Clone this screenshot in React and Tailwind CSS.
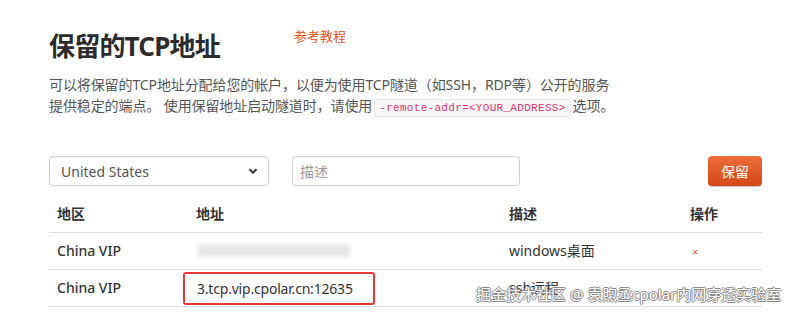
import React from "react";

const rows = [
    { region: "China VIP", address: null, desc: "windows桌面", action: true },
    { region: "China VIP", address: "3.tcp.vip.cpolar.cn:12635", desc: "ssh远程", action: false },
];

export default function App() {
    return (
        <div className="relative w-[798px] h-[312px] overflow-hidden bg-white font-['Noto_Sans','Noto_Sans_CJK_SC',sans-serif] text-[#333]">
            <div className="w-[713px] ml-[49px] pt-[30px]">
                {/* Title */}
                <div className="flex items-start">
                    <h1 className="text-[26px] leading-[32px] font-bold text-[#2b2b2b] tracking-[-0.8px]">保留的TCP地址</h1>
                    <a className="ml-[74px] -mt-[4px] text-[13px] leading-[20px] text-[#de5520]">参考教程</a>
                </div>

                {/* Description */}
                <p className="mt-[12px] text-[14px] leading-[21px] text-[#555] tracking-[-0.1px]">
                    可以将保留的TCP地址分配给您的帐户，以便为使用TCP隧道（如SSH，RDP等）公开的服务
                    <br />
                    提供稳定的端点。 使用保留地址启动隧道时，请使用
                    <code className="mx-[2px] px-[4px] py-[2px] rounded-[3px] border border-[#e6e6e6] bg-[#f7f7f9] text-[11px] leading-[14px] tracking-[0.3px] text-[#d6336c] font-['Liberation_Mono',monospace]">
                        -remote-addr=&lt;YOUR_ADDRESS&gt;
                    </code>
                    选项。
                </p>

                {/* Controls */}
                <div className="mt-[40px] flex items-center h-[30px]">
                    <div className="w-[220px] h-[30px] flex items-center justify-between px-[11px] border border-[#cfcfcf] rounded-[4px] text-[14px] text-[#555]">
                        <span>United States</span>
                        <svg width="10" height="10" viewBox="0 0 10 10" className="mr-[-1px]">
                            <path d="M1.5 3.2 L5 6.7 L8.5 3.2" fill="none" stroke="#333" strokeWidth="2" />
                        </svg>
                    </div>
                    <div className="ml-[23px] w-[228px] h-[30px] flex items-center px-[7px] border border-[#cfcfcf] rounded-[4px] text-[14px] text-[#9a9a9a]">
                        描述
                    </div>
                    <button className="ml-auto w-[54px] h-[30px] rounded-[4px] bg-gradient-to-b from-[#ee6d38] to-[#d44617] text-white text-[14px] shadow-[0_1px_1px_rgba(0,0,0,0.25)]">
                        保留
                    </button>
                </div>

                {/* Table */}
                <table className="mt-[9px] w-full border-collapse text-[14px]">
                    <thead>
                        <tr className="h-[37px] border-b border-[#dedede] text-left">
                            <th className="w-[139px] pl-[8px] font-bold text-[#333]">地区</th>
                            <th className="w-[313px] pl-[8px] font-bold text-[#333]">地址</th>
                            <th className="w-[181px] pl-[8px] font-bold text-[#333]">描述</th>
                            <th className="pl-[8px] font-bold text-[#333]">操作</th>
                        </tr>
                    </thead>
                    <tbody>
                        {rows.map((row, i) => (
                            <tr key={i} className="h-[37px] border-b border-[#dedede]">
                                <td className="pl-[8px] font-medium text-[#333]">{row.region}</td>
                                <td className="pl-[8px]">
                                    {row.address ? (
                                        <div className="-ml-[13px] w-[192px] h-[33px] mt-[1px] flex items-center pl-[12px] border-2 border-[#e53935] rounded-[3px] text-[#333] tracking-[-0.2px]">
                                            {row.address}
                                        </div>
                                    ) : (
                                        <div className="ml-[2px] w-[152px] h-[12px] bg-[#e6e6e6] blur-[2px] rounded-[2px]"></div>
                                    )}
                                </td>
                                <td className="pl-[8px] text-[#333]">{row.desc}</td>
                                <td className="pl-[10px]">
                                    {row.action && <span className="text-[11px] text-[#de5520]">×</span>}
                                </td>
                            </tr>
                        ))}
                    </tbody>
                </table>
            </div>

            {/* Watermark */}
            <div className="absolute left-[476px] top-[284px] text-[15px] leading-[20px] text-white whitespace-nowrap [text-shadow:1px_0_0_#8a8a8a,-1px_0_0_#8a8a8a,0_1px_0_#8a8a8a,0_-1px_0_#8a8a8a]">
                掘金技术社区 @ 袁煦丞cpolar内网穿透实验室
            </div>
        </div>
    );
}
